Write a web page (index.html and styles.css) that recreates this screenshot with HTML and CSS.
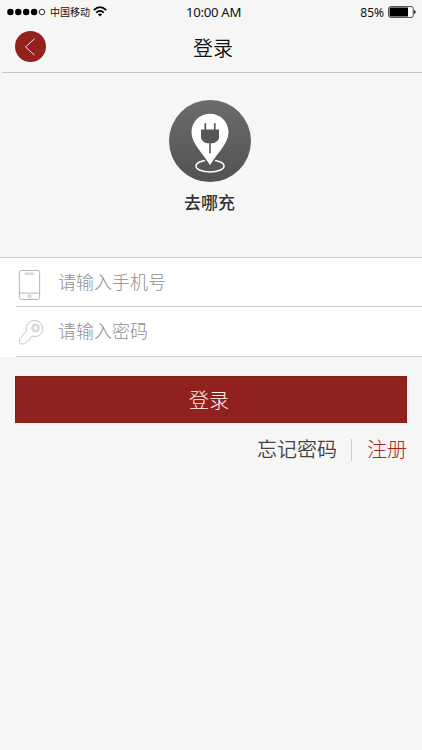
FILE: index.html
```html
<!DOCTYPE html>
<html lang="zh-CN">
<head>
<meta charset="utf-8">
<meta name="viewport" content="width=device-width, initial-scale=1">
<title>登录</title>
<link rel="stylesheet" href="styles.css">
</head>
<body>
<div class="status">
  <div class="carrier">
    <svg class="dots" width="40" height="8" viewBox="0 0 40 8"><g fill="#000"><circle cx="3.4" cy="4" r="3.2"/><circle cx="11.3" cy="4" r="3.2"/><circle cx="19.2" cy="4" r="3.2"/><circle cx="27.1" cy="4" r="3.2"/></g><circle cx="35" cy="4" r="2.8" fill="none" stroke="#000" stroke-width=".8"/></svg>
    <span class="operator">中国移动</span>
    <svg class="wifi" width="14" height="11" viewBox="0 0 14 11"><g fill="none" stroke="#000" stroke-width="1.7"><path d="M.8 4.1Q7-1.7 13.2 4.1"/><path d="M3.2 6.7Q7 3.1 10.8 6.7"/></g><path d="M4.9 8.3Q7 6.6 9.1 8.3L7 10.5Z"/></svg>
  </div>
  <time class="clock">10:00 AM</time>
  <div class="power"><span>85%</span>
    <svg width="28" height="12" viewBox="0 0 28 12"><rect x=".6" y=".6" width="24.6" height="10.8" rx="2" fill="#fff" stroke="#444" stroke-width="1"/><rect x="1.6" y="1.6" width="18.4" height="8.8" rx=".6"/><path d="M26 4Q27.7 4.3 27.7 6T26 8Z" fill="#222"/></svg>
  </div>
</div>
<header class="header">
  <button class="back" aria-label="返回"><svg width="31" height="31" viewBox="0 0 31 31"><circle cx="15.5" cy="15.5" r="15.5" fill="#93211e"/><path d="M19.6 7.6L10.5 16L19.6 24.2" fill="none" stroke="#f3dddc" stroke-width="1"/></svg></button>
  <h1>登录</h1>
</header>
<section class="brand">
  <svg width="82" height="82" viewBox="0 0 82 82">
    <defs><linearGradient id="disc" x1="0" y1="0" x2="0" y2="1"><stop offset="0" stop-color="#6c6c6c"/><stop offset="1" stop-color="#525252"/></linearGradient></defs>
    <circle cx="41" cy="41" r="41" fill="url(#disc)"/>
    <ellipse cx="41" cy="66" rx="14" ry="6" fill="none" stroke="#fff" stroke-width="1.5"/>
    <path d="M32.8 55L41 67.5L49.2 55Z" fill="#575757" stroke="#575757"/>
    <path d="M41 65.2C35.5 55 22.5 44 22.5 32.2C22.5 21.6 30.7 13.7 41 13.7S59.5 21.6 59.5 32.2C59.5 44 46.5 55 41 65.2Z" fill="#fff"/>
    <path d="M35.5 23.3H37.2V29.5H44.9V23.3H46.6V29.5H50V38.5Q47.3 43.2 43 43.2H41.8V53.3H40.2V43.2H39Q34.7 43.2 32 38.5V29.5H35.5Z" fill="#565656"/>
  </svg>
  <p>去哪充</p>
</section>
<form class="form">
  <label class="field">
    <svg width="24" height="32" viewBox="0 0 24 32" fill="none" stroke="#b5b5b5" stroke-width="1"><rect x="1.4" y="1.5" width="20.2" height="29" rx="2"/><path d="M1.4 24.1H21.6"/><rect x="7" y="4" width="9" height="1.3" rx=".6" stroke-width=".7"/><circle cx="11.5" cy="27.3" r="1.5"/></svg>
    <input type="text" placeholder="请输入手机号">
  </label>
  <label class="field">
    <svg width="26" height="28" viewBox="0 0 26 28" fill="none" stroke="#c4c4c4" stroke-width="1"><path d="M8.6 12.7C7 7 11.3 2.5 16.2 2.5C21 2.5 24.8 6.1 24.8 10.6C24.8 16 20.2 19.7 14.2 18.1L12.3 20.1L11.7 22L9.5 22.7L7.3 25.3Q6.8 25.9 5.9 25.9H2.7Q1.4 25.9 1.4 24.5V22Q1.4 21.2 2 20.5Z"/><circle cx="17.5" cy="10" r="3.8"/><circle cx="17.5" cy="10" r="2.2" stroke-width=".8"/></svg>
    <input type="password" placeholder="请输入密码">
  </label>
</form>
<button class="submit">登录</button>
<nav class="links"><a class="forgot">忘记密码</a><a class="register">注册</a></nav>
</body>
</html>
```
FILE: styles.css
```css
* { box-sizing: border-box; }
body {
  margin: 0;
  min-height: 750px;
  background: #f6f6f6;
  color: #111;
  font-family: "Noto Sans", "Noto Sans CJK SC", sans-serif;
}
button { border: 0; padding: 0; font-family: inherit; }
.status {
  display: grid;
  grid-template-columns: 1fr auto 1fr;
  align-items: center;
  height: 23px;
  padding: 0 6px 0 7px;
}
.carrier, .power { display: flex; align-items: center; }
.dots { margin-top: -1px; }
.operator { margin: -1px 3px 0 3px; font-size: 10px; line-height: 22px; }
.clock { font-size: 13.2px; line-height: 23px; letter-spacing: -.3px; margin: 1px 0 0 4px; }
.power { justify-content: flex-end; gap: 4px; font-size: 12px; }
.power svg { margin-top: -1px; }
.wifi { margin-top: -1px; }
.header {
  display: grid;
  grid-template-columns: 31px 1fr 31px;
  align-items: center;
  height: 50px;
  margin-left: 2px;
  padding: 0 11px 2px 13px;
  border-bottom: 1px solid #c3c5c6;
}
.back { height: 31px; background: none; }
.back svg { display: block; margin-left: -.5px; }
.header h1 {
  margin: 2px 0 0;
  text-align: center;
  font-family: "Noto Sans CJK SC", sans-serif;
  font-size: 20px;
  font-weight: 350;
  line-height: 30px;
}
.brand {
  display: flex;
  flex-direction: column;
  align-items: center;
  height: 184px;
  padding-top: 27px;
}
.brand svg { margin-right: 3px; }
.brand p {
  margin: 9px 3px 0 0;
  color: #333;
  font-size: 17px;
  font-weight: 500;
  line-height: 24px;
}
.form { height: 100px; background: #fff; border-top: 1px solid #ccc; }
.field {
  display: grid;
  grid-template-columns: 40px 1fr;
  align-items: center;
  height: 49px;
  margin-left: 16px;
  padding: 4px 0 0 2px;
  border-bottom: 1px solid #ccc;
}
.field svg { margin-top: 1px; }
.field + .field { height: 50px; padding-top: 1px; }
.field + .field svg { margin-top: 0; }
.field input {
  width: 100%;
  height: 30px;
  margin-top: -6px;
  padding: 0;
  border: 0;
  outline: 0;
  background: none;
  font: 300 18px/30px "Noto Sans CJK SC", sans-serif;
}
.field + .field input { margin-top: -4px; }
.field input::placeholder { color: #8f8f8f; opacity: 1; }
.submit {
  display: block;
  width: 392px;
  height: 47px;
  margin: 19px 0 0 15px;
  padding-right: 4px;
  border: 1px solid #841c1a;
  background: #91211e;
  color: #fff5f3;
  font-family: "Noto Sans CJK SC", sans-serif;
  font-size: 20px;
  font-weight: 300;
}
.links {
  display: flex;
  justify-content: flex-end;
  align-items: center;
  margin: 10px 15px 0 0;
  font-family: "Noto Sans CJK SC", sans-serif;
  font-size: 20px;
  font-weight: 350;
  line-height: 32px;
}
.forgot { color: #444; }
.register { color: #a32522; font-weight: 300; }
.register::before {
  content: "";
  display: inline-block;
  height: 22px;
  margin: 0 15px 0 14px;
  border-left: 1px solid #ccc;
  vertical-align: -4px;
}
```
